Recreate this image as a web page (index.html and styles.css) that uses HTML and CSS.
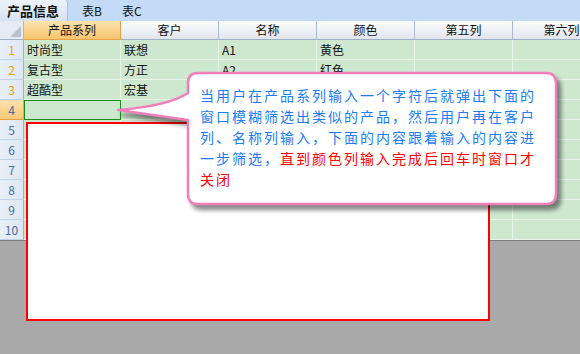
FILE: index.html
```html
<!doctype html>
<html lang="zh-CN">
  <head>
    <meta charset="UTF-8" />
    <meta name="viewport" content="width=device-width, initial-scale=1.0" />
    <title>产品信息</title>
    <link rel="stylesheet" href="styles.css">
  </head>
  <body>
    <div class="app">
      <div class="tabs">
        <span class="tab active">产品信息</span>
        <span class="tab">表B</span>
        <span class="tab">表C</span>
      </div>

      <div class="sheet">
        <div class="corner"><span class="tri"></span></div>
        <div class="col sel">产品系列</div>
        <div class="col">客户</div>
        <div class="col">名称</div>
        <div class="col">颜色</div>
        <div class="col">第五列</div>
        <div class="col">第六列</div>

        <div class="rh hot">1</div><div class="cell">时尚型</div><div class="cell">联想</div><div class="cell">A1</div><div class="cell">黄色</div><div class="cell"></div><div class="cell"></div>
        <div class="rh hot">2</div><div class="cell">复古型</div><div class="cell">方正</div><div class="cell">A2</div><div class="cell">红色</div><div class="cell"></div><div class="cell"></div>
        <div class="rh hot">3</div><div class="cell">超酷型</div><div class="cell">宏基</div><div class="cell"></div><div class="cell"></div><div class="cell"></div><div class="cell"></div>
        <div class="rh sel">4</div><div class="cell active"></div><div class="cell"></div><div class="cell"></div><div class="cell"></div><div class="cell"></div><div class="cell"></div>
        <div class="rh">5</div><div class="cell"></div><div class="cell"></div><div class="cell"></div><div class="cell"></div><div class="cell"></div><div class="cell"></div>
        <div class="rh">6</div><div class="cell"></div><div class="cell"></div><div class="cell"></div><div class="cell"></div><div class="cell"></div><div class="cell"></div>
        <div class="rh">7</div><div class="cell"></div><div class="cell"></div><div class="cell"></div><div class="cell"></div><div class="cell"></div><div class="cell"></div>
        <div class="rh">8</div><div class="cell"></div><div class="cell"></div><div class="cell"></div><div class="cell"></div><div class="cell"></div><div class="cell"></div>
        <div class="rh">9</div><div class="cell"></div><div class="cell"></div><div class="cell"></div><div class="cell"></div><div class="cell"></div><div class="cell"></div>
        <div class="rh">10</div><div class="cell"></div><div class="cell"></div><div class="cell"></div><div class="cell"></div><div class="cell"></div><div class="cell"></div>
      </div>

      <!-- dropdown window that pops up under the active cell -->
      <div class="popup"></div>

      <!-- note callout -->
      <svg class="callout" width="580" height="354" viewBox="0 0 580 354">
        <path d="M198,73 H546 Q556,73 556,83 V194 Q556,204 546,204 H198 Q188,204 188,194 V120 L118,110 Q168,106 188,93 V83 Q188,73 198,73 Z"
              fill="#fff" stroke="#f07fbc" stroke-width="2.5" stroke-linejoin="round" />
      </svg>
      <p class="note">当用户在产品系列输入一个字符后就弹出下面的窗口模糊筛选出类似的产品，然后用户再在客户列、名称列输入，下面的内容跟着输入的内容进一步筛选，<span class="red">直到颜色列输入完成后回车时窗口才关闭</span></p>
    </div>
  </body>
</html>
```

FILE: styles.css
```css
body {
  margin: 0;
  background: #a9a9a9;
  font-family: "Noto Sans CJK SC", "Liberation Sans", sans-serif;
  overflow: hidden;
}
.app {
  position: relative;
  width: 580px;
  height: 354px;
  overflow: hidden;
}
.tabs {
  display: flex;
  height: 21px;
  background: #c3dbf7;
  font-size: 12px;
  line-height: 21px;
  color: #111;
  white-space: nowrap;
}
.tab {
  padding: 0 12px 0 0;
}
.tab.active {
  flex: none;
  width: 68px;
  box-sizing: border-box;
  padding-left: 7px;
  margin-right: 14px;
  font-size: 13px;
  font-weight: bold;
  background: linear-gradient(#eef3fa, #d6e2f0);
  border-right: 1px solid #a9bfd8;
  border-top-right-radius: 3px;
}
.tab + .tab + .tab {
  margin-left: 8px;
}
.sheet {
  display: grid;
  grid-template-columns: 24px 97px repeat(5, 98px);
  grid-template-rows: 19px repeat(10, 20px);
  width: 611px;
  border-bottom: 1px solid #7f7f7f;
  font-size: 12px;
  color: #111;
}
.corner {
  display: flex;
  align-items: flex-end;
  justify-content: flex-end;
  background: #e4ebf5;
  border-right: 1px solid #a7b9cf;
  border-bottom: 1px solid #9db0c6;
}
.tri {
  width: 0;
  height: 0;
  border-left: 11px solid transparent;
  border-bottom: 11px solid #b7c0cc;
  margin: 0 2px 2px 0;
}
.col {
  background: linear-gradient(#fbfcfd, #e1e6ed);
  border-right: 1px solid #a7b9cf;
  border-bottom: 1px solid #9db0c6;
  text-align: center;
  line-height: 18px;
}
.col.sel {
  background: linear-gradient(#fce3b0, #f6c46e);
  border-right-color: #e8a246;
  border-bottom-color: #e8a246;
}
.rh {
  background: linear-gradient(90deg, #e9eff8, #dce6f3);
  border-right: 1px solid #9fb5cf;
  border-bottom: 1px solid #c2d1e3;
  text-align: center;
  line-height: 19px;
  color: #4a6c9c;
}
.rh.hot {
  color: #f0a000;
}
.rh.sel {
  background: linear-gradient(#fde2ad, #f8c878);
  border-bottom-color: #e8a246;
}
.cell {
  background: #cde8cf;
  border-right: 1px solid #eaf5ea;
  border-bottom: 1px solid #eaf5ea;
  padding-left: 3px;
  line-height: 19px;
  white-space: nowrap;
}
.cell.active {
  outline: 1px solid #1b8a1b;
  outline-offset: -1px;
}
.popup {
  position: absolute;
  left: 26px;
  top: 122px;
  width: 464px;
  height: 199px;
  box-sizing: border-box;
  border: 2px solid #ff0000;
  background: #fff;
}
.callout {
  position: absolute;
  left: 0;
  top: 0;
  filter: drop-shadow(4px 5px 2px rgba(0, 0, 0, 0.45));
}
.note {
  position: absolute;
  left: 200px;
  top: 85px;
  width: 340px;
  margin: 0;
  font-size: 14px;
  letter-spacing: 2px;
  line-height: 21px;
  color: #1a7df5;
}
.red {
  color: #ff0000;
}
```
